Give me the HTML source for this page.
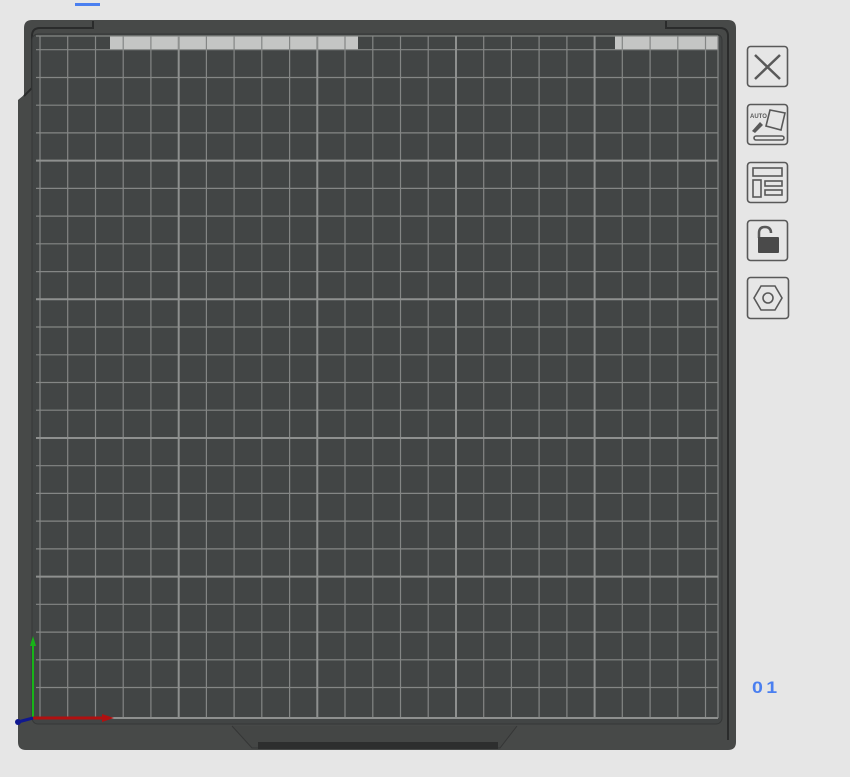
<!DOCTYPE html>
<html><head><style>
html,body{margin:0;padding:0;background:#e6e6e6;width:850px;height:777px;overflow:hidden;font-family:"Liberation Sans",sans-serif}
</style></head><body>
<svg width="850" height="777" xmlns="http://www.w3.org/2000/svg" style="position:absolute;left:0;top:0">
<rect x="75" y="3" width="25" height="3" fill="#4a7ff0"/>
<path d="M24,28 Q24,20 32,20 L728,20 Q736,20 736,28 L736,742 Q736,750 728,750 L26,750 Q18,750 18,742 L18,100 L24,95 Z" fill="#474948"/>
<path d="M93,21 L93,28 L40,28 Q32,28 32,36 L32,88 L24,96" fill="none" stroke="#2a2b2b" stroke-width="2"/>
<path d="M666,21 L666,28 L720,28 Q728,28 728,36 L728,740" fill="none" stroke="#2a2b2b" stroke-width="2"/>
<path d="M232,726 L252,748 L500,748 L517,726" fill="#444645" stroke="#353636" stroke-width="1"/>
<rect x="258" y="742" width="240" height="7" fill="#2d2e2e"/>
<rect x="32" y="34" width="690" height="690" rx="6" fill="#424545" stroke="#363838"/>
<rect x="110" y="36" width="248" height="14" fill="#c4c5c4"/>
<rect x="615" y="36" width="103" height="14" fill="#c4c5c4"/>
<path stroke="#848685" stroke-width="1.2" fill="none" d="
M40,36V718 M67.7,36V718 M95.5,36V718 M123.2,36V718 M150.9,36V718 M206.4,36V718 M234.1,36V718 M261.8,36V718 M289.6,36V718 M345,36V718 M372.8,36V718 M400.5,36V718 M428.2,36V718 M483.7,36V718 M511.4,36V718 M539.1,36V718 M566.9,36V718 M622.3,36V718 M650.1,36V718 M677.8,36V718 M705.5,36V718 M718,36V718
M36,36H718 M36,49.7H718 M36,77.5H718 M36,105.2H718 M36,132.9H718 M36,188.4H718 M36,216.1H718 M36,243.8H718 M36,271.6H718 M36,327H718 M36,354.8H718 M36,382.5H718 M36,410.2H718 M36,465.7H718 M36,493.4H718 M36,521.1H718 M36,548.9H718 M36,604.3H718 M36,632.1H718 M36,659.8H718 M36,687.5H718"/>
<path stroke="#8e908f" stroke-width="2" fill="none" d="M178.7,36V718 M317.3,36V718 M456,36V718 M594.6,36V718 M36,160.6H718 M36,299.3H718 M36,438H718 M36,576.6H718 M36,718H718"/>
<line x1="33" y1="717" x2="33" y2="644" stroke="#18b418" stroke-width="2"/>
<path d="M30,646 L33,636 L36,646Z" fill="#18b418"/>
<line x1="33" y1="718" x2="104" y2="718" stroke="#b01010" stroke-width="3"/>
<path d="M102,714 L114,718 L102,722Z" fill="#b01010"/>
<line x1="33" y1="718" x2="18" y2="722" stroke="#101890" stroke-width="3"/>
<circle cx="18" cy="722" r="3" fill="#101890"/>
<g fill="none" stroke="#595959" stroke-width="1.6">
<rect x="747.5" y="46.5" width="40" height="40" rx="3"/>
<path d="M755,55 L780,79 M780,55 L755,79" stroke-width="2.5"/>
<rect x="747.5" y="104.5" width="40" height="40" rx="3"/>
<path d="M770,110 L785,113 L781,130 L766,126Z"/>
<rect x="754" y="136" width="30" height="4" rx="2"/>
<rect x="747.5" y="162.5" width="40" height="40" rx="3"/>
<rect x="753" y="168" width="29" height="8"/>
<rect x="753" y="180" width="8" height="17"/>
<rect x="765" y="181" width="17" height="5"/>
<rect x="765" y="190" width="17" height="5"/>
<rect x="747.5" y="220.5" width="40" height="40" rx="3"/>
<path d="M759,238 L759,233 Q759,227 765,227 Q771,227 771,233" stroke-width="2.5"/>
<rect x="747.5" y="277.5" width="41" height="41" rx="3"/>
<path d="M761,286 L775,286 L782,298 L775,310 L761,310 L754,298Z"/>
<circle cx="768" cy="298" r="5"/>
</g>
<rect x="758" y="237" width="21" height="16" rx="1" fill="#4a4a4a"/>
<text x="750" y="118" font-size="6" font-weight="bold" fill="#595959" font-family="Liberation Sans">AUTO</text>
<path d="M752,131 L760,122 L763,125 L755,133Z" fill="#595959"/>
<text x="752" y="693" font-size="17" font-weight="bold" fill="#4a7ff0" font-family="Liberation Sans" letter-spacing="3" transform="translate(752 0) scale(1.15 1) translate(-752 0)">01</text>
</svg>
</body></html>
